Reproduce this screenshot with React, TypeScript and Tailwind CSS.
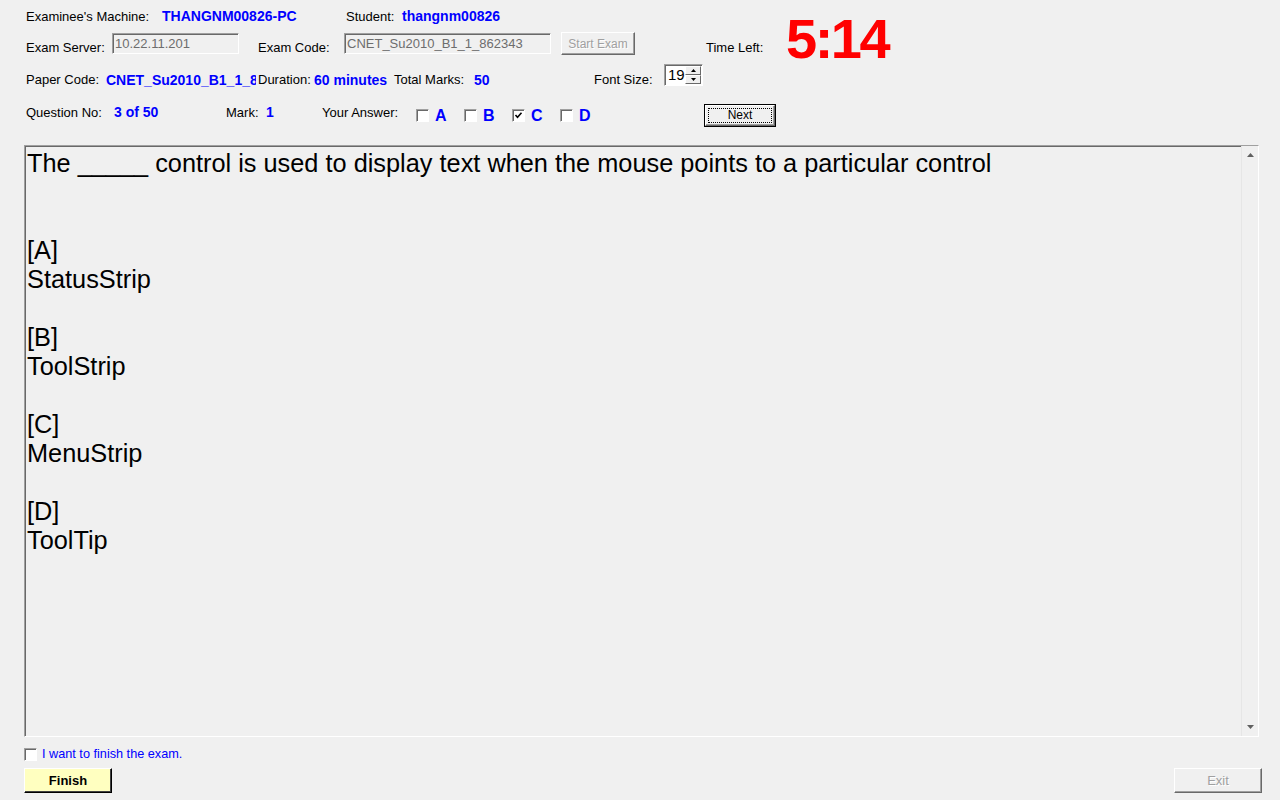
import React from "react";

function Sunken({ className = "", children }: { className?: string; children?: React.ReactNode }) {
  return (
    <div
      className={
        "border border-t-[#a0a0a0] border-l-[#a0a0a0] border-b-white border-r-white shadow-[inset_1px_1px_0_#696969] " +
        className
      }
    >
      {children}
    </div>
  );
}

function CheckBox({ checked = false }: { checked?: boolean }) {
  return (
    <div className="w-[13px] h-[13px] shrink-0 border border-t-[#a0a0a0] border-l-[#a0a0a0] border-b-white border-r-white shadow-[inset_1px_1px_0_#696969] bg-white flex items-center justify-center">
      {checked && (
        <svg width="9" height="9" viewBox="0 0 9 9">
          <path d="M1.5 4 L3.5 6.2 L7.5 1.8" fill="none" stroke="#000" strokeWidth="1.6" />
        </svg>
      )}
    </div>
  );
}

function Option({ letter, checked = false }: { letter: string; checked?: boolean }) {
  return (
    <div className="flex items-start w-[48px]">
      <div className="mt-[5px]">
        <CheckBox checked={checked} />
      </div>
      <div className="ml-[6px] mt-[3px] text-[16px] leading-[18px] font-bold text-[#0000ff]">{letter}</div>
    </div>
  );
}

export default function App() {
  const label = "text-[13px] leading-[15px] shrink-0 whitespace-nowrap";
  const value = "text-[14px] leading-[16px] font-bold text-[#0000ff] shrink-0 whitespace-nowrap";
  const lines = [
    "The _____ control is used to display text when the mouse points to a particular control",
    "",
    "",
    "[A]",
    "StatusStrip",
    "",
    "[B]",
    "ToolStrip",
    "",
    "[C]",
    "MenuStrip",
    "",
    "[D]",
    "ToolTip",
  ];
  return (
    <div className="w-[1280px] h-[800px] bg-[#f0f0f0] text-black overflow-hidden flex flex-col font-['Liberation_Sans',Arial,sans-serif]">
      {/* header rows 1-2 + timer */}
      <div className="flex h-[64px] shrink-0">
        <div className="w-[780px] flex flex-col">
          <div className="flex items-center h-[16px] mt-[8px] pl-[26px]">
            <div className={label + " w-[136px]"}>Examinee's Machine:</div>
            <div className={value + " w-[184px]"}>THANGNM00826-PC</div>
            <div className={label + " w-[56px]"}>Student:</div>
            <div className={value}>thangnm00826</div>
          </div>
          <div className="flex items-start h-[24px] mt-[8px] pl-[26px]">
            <div className={label + " w-[86px] pt-[8px]"}>Exam Server:</div>
            <Sunken className="w-[127px] h-[21px] mt-[1px] flex items-center pl-[2px] shrink-0">
              <span className="text-[13px] text-[#6d6d6d]">10.22.11.201</span>
            </Sunken>
            <div className={label + " w-[86px] ml-[19px] pt-[8px]"}>Exam Code:</div>
            <Sunken className="w-[207px] h-[21px] mt-[1px] flex items-center pl-[2px] shrink-0">
              <span className="text-[13px] text-[#6d6d6d] whitespace-nowrap">CNET_Su2010_B1_1_862343</span>
            </Sunken>
            <div className="ml-[10px] w-[74px] h-[23px] shrink-0 border border-t-white border-l-white border-b-[#696969] border-r-[#696969] shadow-[inset_-1px_-1px_0_#a0a0a0] flex items-center justify-center text-[12px] text-[#a0a0a0] [text-shadow:1px_1px_0_#fff]">
              Start Exam
            </div>
            <div className={label + " ml-[71px] pt-[8px]"}>Time Left:</div>
          </div>
        </div>
        <div className="ml-[6px] mt-[14px] h-[50px] text-[56px] leading-[50px] font-bold text-[#ff0000] tracking-[-2.5px] whitespace-nowrap">
          5:14
        </div>
      </div>

      {/* row 3 */}
      <div className="flex items-start h-[22px] pl-[26px] shrink-0">
        <div className={label + " w-[80px] pt-[8px]"}>Paper Code:</div>
        <div className="w-[150px] mr-[2px] overflow-hidden shrink-0">
          <div className={value + " pt-[8px]"}>CNET_Su2010_B1_1_862343</div>
        </div>
        <div className={label + " w-[56px] pt-[8px]"}>Duration:</div>
        <div className={value + " w-[80px] pt-[8px]"}>60 minutes</div>
        <div className={label + " w-[80px] pt-[8px]"}>Total Marks:</div>
        <div className={value + " w-[120px] pt-[8px]"}>50</div>
        <div className={label + " w-[70px] pt-[8px]"}>Font Size:</div>
        <Sunken className="w-[39px] h-[22px] bg-white flex items-center shrink-0">
          <span className="ml-[3px] text-[15px] leading-[16px] text-black">19</span>
          <div className="ml-auto mr-[1px] flex flex-col h-[18px] w-[16px]">
            <div className="flex-1 border border-t-white border-l-white border-b-[#696969] border-r-[#696969] bg-[#f0f0f0] flex items-center justify-center">
              <svg width="5" height="3" viewBox="0 0 5 3">
                <path d="M2.5 0 L5 3 L0 3 Z" fill="#000" />
              </svg>
            </div>
            <div className="flex-1 border border-t-white border-l-white border-b-[#696969] border-r-[#696969] bg-[#f0f0f0] flex items-center justify-center">
              <svg width="5" height="3" viewBox="0 0 5 3">
                <path d="M0 0 L5 0 L2.5 3 Z" fill="#000" />
              </svg>
            </div>
          </div>
        </Sunken>
      </div>

      {/* row 4 */}
      <div className="flex items-start h-[23px] mt-[18px] pl-[26px] shrink-0">
        <div className={label + " w-[88px] pt-[1px]"}>Question No:</div>
        <div className={value + " w-[112px]"}>3 of 50</div>
        <div className={label + " w-[40px] pt-[1px]"}>Mark:</div>
        <div className={value + " w-[56px]"}>1</div>
        <div className={label + " w-[94px] pt-[1px]"}>Your Answer:</div>
        <Option letter="A" />
        <Option letter="B" />
        <Option letter="C" checked />
        <Option letter="D" />
        <div className="ml-[96px] w-[72px] h-[23px] shrink-0 border border-black">
          <div className="w-full h-full border border-t-white border-l-white border-b-[#696969] border-r-[#696969] shadow-[inset_-1px_-1px_0_#a0a0a0] p-[2px]">
            <div className="w-full h-full border border-dotted border-black flex items-center justify-center text-[12px] leading-[13px]">
              Next
            </div>
          </div>
        </div>
      </div>

      {/* question box */}
      <div className="mt-[18px] ml-[24px] w-[1235px] h-[592px] shrink-0 flex border border-t-[#a0a0a0] border-l-[#a0a0a0] border-b-white border-r-white shadow-[inset_1px_1px_0_#696969]">
        <div className="flex-1 pl-[2px] pt-[3px] text-[25.33px] leading-[29px] text-black whitespace-pre">
          {lines.map((l, i) => (
            <div key={i} className="h-[29px]">
              {l}
            </div>
          ))}
        </div>
        <div className="w-[17px] h-full flex flex-col items-center justify-between border-l border-[#e6e6e6] bg-[#f0f0f0] py-[7px]">
          <svg width="7" height="4" viewBox="0 0 7 4">
            <path d="M3.5 0 L7 4 L0 4 Z" fill="#606060" />
          </svg>
          <svg width="7" height="4" viewBox="0 0 7 4">
            <path d="M0 0 L7 0 L3.5 4 Z" fill="#606060" />
          </svg>
        </div>
      </div>

      {/* finish checkbox */}
      <div className="flex items-center h-[13px] mt-[11px] pl-[24px] shrink-0">
        <CheckBox />
        <div className="ml-[5px] text-[12.7px] leading-[15px] text-[#0000ff]">I want to finish the exam.</div>
      </div>

      {/* buttons */}
      <div className="flex justify-between mt-[7px] pl-[24px] pr-[18px] shrink-0">
        <div className="w-[88px] h-[25px] bg-[#ffffc0] border border-t-white border-l-white border-b-black border-r-black shadow-[inset_-1px_-1px_0_#404040] flex items-center justify-center text-[13px] font-bold text-black">
          Finish
        </div>
        <div className="w-[88px] h-[25px] border border-t-white border-l-white border-b-[#696969] border-r-[#696969] shadow-[inset_-1px_-1px_0_#a0a0a0] flex items-center justify-center text-[13px] text-[#a0a0a0] [text-shadow:1px_1px_0_#fff]">
          Exit
        </div>
      </div>
    </div>
  );
}
